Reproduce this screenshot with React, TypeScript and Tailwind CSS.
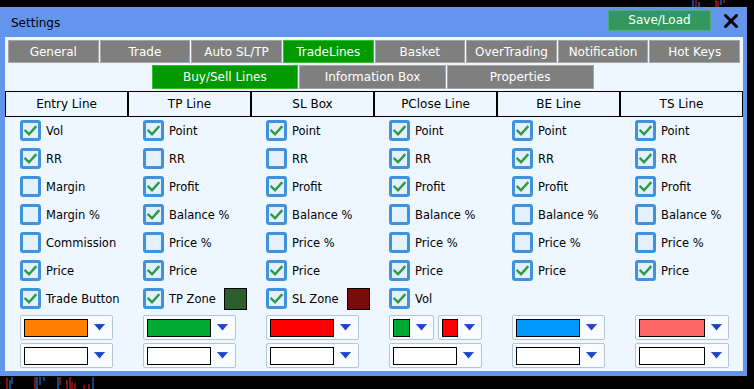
import React from "react";

type Item = { label: string; checked: boolean; zone?: string };

const font = { fontFamily: '"DejaVu Sans", Verdana, sans-serif' };

function Check({ checked }: { checked: boolean }) {
  return (
    <div className="w-[21px] h-[21px] shrink-0 rounded-[3px] border-[3px] border-[#3f92dc] bg-[#e2f1fc] flex items-center justify-center">
      {checked && (
        <svg width="15" height="15" viewBox="0 0 15 15">
          <path d="M2.5 7.8 L6 11.2 L12.5 4" fill="none" stroke="#2f9a45" strokeWidth="2.4" strokeLinecap="square" />
        </svg>
      )}
    </div>
  );
}

function Arrow() {
  return (
    <svg width="11" height="7" viewBox="0 0 11 7" className="shrink-0">
      <path d="M0 0 H11 L5.5 6.5 Z" fill="#1c45c8" />
      <path d="M0 0 H11" stroke="#3a64e0" strokeWidth="1" />
    </svg>
  );
}

function Drop({ color, w, sw }: { color: string; w: number; sw: number }) {
  return (
    <div
      className="h-[25px] rounded-[2px] border border-[#b3c6d8] bg-[#f9fcff] flex items-center pl-[3px]"
      style={{ width: w }}
    >
      <div className="h-[18px] border border-black shrink-0" style={{ width: sw, background: color }} />
      <div className="flex-1 flex justify-center pr-[1px]">
        <Arrow />
      </div>
    </div>
  );
}

const data: { title: string; items: Item[]; drops: [string, string][]; split?: boolean; w?: number }[] = [
  {
    title: "Entry Line",
    items: [
      { label: "Vol", checked: true },
      { label: "RR", checked: true },
      { label: "Margin", checked: false },
      { label: "Margin %", checked: false },
      { label: "Commission", checked: false },
      { label: "Price", checked: true },
      { label: "Trade Button", checked: true },
    ],
    drops: [["#ff8000", ""], ["#ffffff", ""]],
  },
  {
    title: "TP Line",
    items: [
      { label: "Point", checked: true },
      { label: "RR", checked: false },
      { label: "Profit", checked: true },
      { label: "Balance %", checked: true },
      { label: "Price %", checked: false },
      { label: "Price", checked: true },
      { label: "TP Zone", checked: true, zone: "#2d5e2d" },
    ],
    drops: [["#00aa33", ""], ["#ffffff", ""]],
  },
  {
    title: "SL Box",
    items: [
      { label: "Point", checked: true },
      { label: "RR", checked: false },
      { label: "Profit", checked: true },
      { label: "Balance %", checked: true },
      { label: "Price %", checked: false },
      { label: "Price", checked: true },
      { label: "SL Zone", checked: true, zone: "#7a0b0b" },
    ],
    drops: [["#ff0000", ""], ["#ffffff", ""]],
  },
  {
    title: "PClose Line",
    items: [
      { label: "Point", checked: true },
      { label: "RR", checked: true },
      { label: "Profit", checked: true },
      { label: "Balance %", checked: false },
      { label: "Price %", checked: false },
      { label: "Price", checked: true },
      { label: "Vol", checked: true },
    ],
    drops: [["#00aa33", "#ff0000"], ["#ffffff", ""]],
    split: true,
  },
  {
    title: "BE Line",
    items: [
      { label: "Point", checked: true },
      { label: "RR", checked: true },
      { label: "Profit", checked: true },
      { label: "Balance %", checked: false },
      { label: "Price %", checked: false },
      { label: "Price", checked: true },
    ],
    drops: [["#0099ff", ""], ["#ffffff", ""]],
  },
  {
    title: "TS Line",
    items: [
      { label: "Point", checked: true },
      { label: "RR", checked: true },
      { label: "Profit", checked: true },
      { label: "Balance %", checked: false },
      { label: "Price %", checked: false },
      { label: "Price", checked: true },
    ],
    drops: [["#ff6666", ""], ["#ffffff", ""]],
    w: 94,
  },
];

const tabs = ["General", "Trade", "Auto SL/TP", "TradeLines", "Basket", "OverTrading", "Notification", "Hot Keys"];
const subTabs = ["Buy/Sell Lines", "Information Box", "Properties"];

export default function App() {
  return (
    <div className="relative w-[754px] h-[389px] bg-black overflow-hidden text-[11.5px] text-black" style={font}>
      {/* chart fragments */}
      <svg className="absolute left-0 top-0" width="754" height="389">
        <g strokeWidth="1">
          <line x1="693" y1="0" x2="693" y2="7" stroke="#1e90ff" />
          <line x1="696" y1="0" x2="696" y2="7" stroke="#ff2020" />
          <line x1="699" y1="2" x2="699" y2="7" stroke="#1e90ff" />
          <line x1="716" y1="0" x2="716" y2="7" stroke="#ff2020" />
          <line x1="718" y1="1" x2="718" y2="7" stroke="#ff2020" />
          <line x1="721" y1="0" x2="721" y2="5" stroke="#1e90ff" />
          <line x1="724" y1="0" x2="724" y2="3" stroke="#ff2020" />
          <line x1="7" y1="378" x2="7" y2="389" stroke="#ff2020" />
          <line x1="10" y1="380" x2="10" y2="389" stroke="#1e90ff" />
          <line x1="12" y1="377" x2="12" y2="384" stroke="#1e90ff" />
          <line x1="35" y1="377" x2="35" y2="389" stroke="#ff2020" />
          <line x1="37" y1="377" x2="37" y2="389" stroke="#1e90ff" />
          <line x1="40" y1="377" x2="40" y2="385" stroke="#1e90ff" />
          <line x1="44" y1="377" x2="44" y2="381" stroke="#1e90ff" />
          <line x1="58" y1="377" x2="58" y2="389" stroke="#1e90ff" />
          <line x1="60" y1="377" x2="60" y2="385" stroke="#ff2020" />
          <line x1="67" y1="380" x2="67" y2="389" stroke="#ff2020" />
          <line x1="70" y1="377" x2="70" y2="389" stroke="#ff2020" />
          <line x1="72" y1="382" x2="72" y2="389" stroke="#ff2020" />
          <line x1="75" y1="383" x2="75" y2="389" stroke="#ff2020" />
          <line x1="84" y1="385" x2="84" y2="389" stroke="#ff2020" />
          <line x1="89" y1="384" x2="89" y2="389" stroke="#ff2020" />
          <line x1="93" y1="377" x2="93" y2="389" stroke="#1e90ff" />
        </g>
      </svg>

      <div className="absolute left-0 top-[7px] w-[747px] h-[369px] bg-[#6495ed] flex flex-col pl-[5px] pr-[4px] pb-[5px]">
        {/* title bar */}
        <div className="h-[30px] flex items-center shrink-0 pr-[2px]">
          <div className="pl-[6px] pt-[2px] text-[12px] text-[#000]">Settings</div>
          <div className="flex-1" />
          <div className="w-[103px] h-[21px] bg-[#32985f] border border-[#4caf78] text-white text-[12px] flex items-center justify-center mt-[-4px]">
            Save/Load
          </div>
          <div className="w-[14px] h-[14px] ml-[13px] mr-[3px] mt-[-2px]">
            <svg width="14" height="14" viewBox="0 0 14 14">
              <path d="M1.5 1.5 L12.5 12.5 M12.5 1.5 L1.5 12.5" stroke="#000" strokeWidth="3" strokeLinecap="square" />
            </svg>
          </div>
        </div>

        {/* content */}
        <div className="flex-1 bg-[#eef7ff] flex flex-col">
          <div className="pt-[3px] pl-[3px]">
            <div className="grid grid-cols-8 gap-px w-[732px] h-[23px]">
              {tabs.map((t) => {
                const active = t === "TradeLines";
                return (
                  <div
                    key={t}
                    className={
                      "flex items-center justify-center text-white text-[12px] border " +
                      (active ? "bg-[#009900] border-[#2fbf2f]" : "bg-[#7f7f7f] border-[#a6a6a6]")
                    }
                  >
                    {t}
                  </div>
                );
              })}
            </div>
          </div>
          <div className="pt-[2px] flex justify-center pr-[3px]">
            <div className="grid grid-cols-3 gap-px w-[442px] h-[24px]">
              {subTabs.map((t) => {
                const active = t === "Buy/Sell Lines";
                return (
                  <div
                    key={t}
                    className={
                      "flex items-center justify-center text-white text-[12px] border " +
                      (active ? "bg-[#009900] border-[#2fbf2f]" : "bg-[#7f7f7f] border-[#a6a6a6]")
                    }
                  >
                    {t}
                  </div>
                );
              })}
            </div>
          </div>

          <div className="mt-[2px] flex">
            {data.map((col) => (
              <div key={col.title} className="w-[123px] flex flex-col shrink-0">
                <div className="h-[26px] border border-black flex items-center justify-center text-[12px]">{col.title}</div>
                <div className="flex flex-col gap-[7px] pt-[3px] pl-[15px] h-[192px]">
                  {col.items.map((it) => (
                    <div key={it.label} className="h-[21px] flex items-center">
                      <Check checked={it.checked} />
                      <span className={"ml-[5px] pt-[2px] " + (it.zone ? "w-[55px]" : "")}>{it.label}</span>
                      {it.zone && (
                        <div className="w-[23px] h-[22px] border border-black" style={{ background: it.zone }} />
                      )}
                    </div>
                  ))}
                </div>
                <div className="mt-[6px] pl-[15px] flex flex-col gap-[3px]">
                  {col.split ? (
                    <div className="flex gap-[4px]">
                      <Drop color={col.drops[0][0]} w={45} sw={17} />
                      <Drop color={col.drops[0][1]} w={44} sw={16} />
                    </div>
                  ) : (
                    <Drop color={col.drops[0][0]} w={col.w ?? 93} sw={col.w ? 66 : 64} />
                  )}
                  <Drop color={col.drops[1][0]} w={col.split ? 93 : col.w ?? 93} sw={col.w ? 66 : 64} />
                </div>
              </div>
            ))}
          </div>
        </div>
      </div>
    </div>
  );
}
